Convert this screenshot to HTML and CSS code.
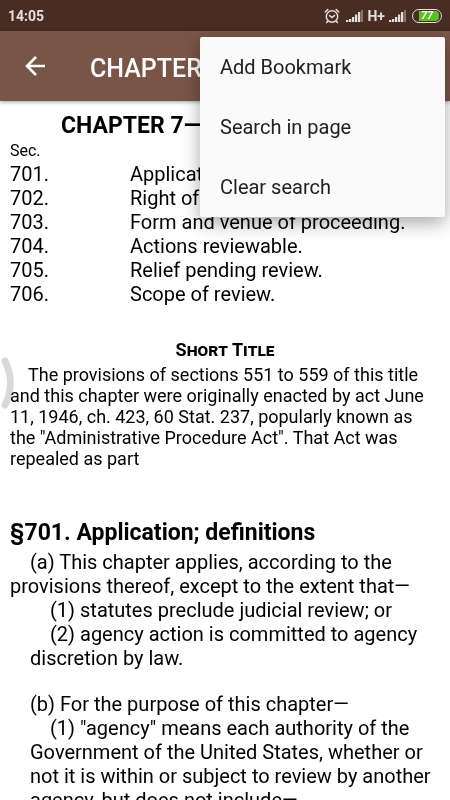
FILE: index.html
```html
<!DOCTYPE html>
<html lang="en">
<head>
<meta charset="UTF-8">
<meta name="viewport" content="width=device-width, initial-scale=1.0">
<title>Chapter 7 - Judicial Review</title>
<link rel="stylesheet" href="styles.css">
</head>
<body>
<div class="status-bar">
    <span class="clock">14:05</span>
    <div class="status-icons">
        <svg class="alarm" width="16" height="16" viewBox="0 0 16 16" fill="none" stroke="#e4dedc" stroke-linecap="round">
            <circle cx="8" cy="8.5" r="5.7" stroke-width="1.5"/>
            <path d="M5.6 7.6 8 9.6l2.6-2.2" stroke-width="1.4"/>
            <path d="M1.2 4 3.8 1.6M14.8 4l-2.6-2.4M3.8 13.2 2.6 14.6M12.2 13.2l1.2 1.4" stroke-width="1.5"/>
        </svg>
        <svg class="signal" width="17" height="12" viewBox="0 0 17 12" fill="#e4dedc">
            <path d="M0 10h2.3v2H0zM3 9h2.3v3H3zM6 7h2.3v5H6zM9 4.500h2.300v7.500H9zM12 2h2.300v10H12z"/>
            <path d="M15 0h2v12h-2z" opacity=".4"/>
        </svg>
        <span class="network">H+</span>
        <svg class="signal" width="17" height="12" viewBox="0 0 17 12" fill="#e4dedc">
            <path d="M0 10h2.3v2H0zM3 9h2.3v3H3zM6 7h2.3v5H6zM9 4.500h2.300v7.500H9zM12 2h2.300v10H12z"/>
            <path d="M15 0h2v12h-2z" opacity=".4"/>
        </svg>
        <span class="battery"><span class="level">77</span></span>
    </div>
</div>

<header class="app-bar">
    <button type="button" class="back" aria-label="Back">
        <svg width="22" height="22" viewBox="0 0 22 22" fill="none" stroke="#fff" stroke-width="2.6">
            <path d="M21 11H3.500M12 2 3 11l9 9"/>
        </svg>
    </button>
    <div class="title">CHAPTER 7—JUDICIAL REVIEW</div>
    <!-- overflow menu -->
    <div class="menu">
        <button type="button">Add Bookmark</button>
        <button type="button">Search in page</button>
        <button type="button">Clear search</button>
    </div>
</header>

<main class="reader">
    <h1>CHAPTER 7—JUDICIAL REVIEW</h1>
    <table class="sections">
        <thead>
            <tr><th colspan="2">Sec.</th></tr>
        </thead>
        <tbody>
            <tr><td>701.</td><td>Application; definitions.</td></tr>
            <tr><td>702.</td><td>Right of review.</td></tr>
            <tr><td>703.</td><td>Form and venue of proceeding.</td></tr>
            <tr><td>704.</td><td>Actions reviewable.</td></tr>
            <tr><td>705.</td><td>Relief pending review.</td></tr>
            <tr><td>706.</td><td>Scope of review.</td></tr>
        </tbody>
    </table>

    <h2 class="note-head">Short Title</h2>
    <p class="note">The provisions of sections 551 to 559 of this title and this chapter were originally enacted by act June 11, 1946, ch. 423, 60 Stat. 237, popularly known as the "Administrative Procedure Act". That Act was repealed as part</p>

    <h2 class="section-head">§701. Application; definitions</h2>
    <p class="para">(a) This chapter applies, according to the provisions thereof, except to the extent that—</p>
    <p class="para sub">(1) statutes preclude judicial review; or</p>
    <p class="para sub">(2) agency action is committed to agency discretion by law.</p>
    <p class="para next">(b) For the purpose of this chapter—</p>
    <p class="para sub">(1) "agency" means each authority of the Government of the United States, whether or not it is within or subject to review by another agency, but does not include—</p>

    <svg class="edge-handle" width="14" height="52" viewBox="0 0 14 52" fill="none" stroke="#d9d9d9" stroke-width="7" stroke-linecap="round">
        <path d="M5 4c7 14 7 30 0 44"/>
    </svg>
</main>
</body>
</html>
```
FILE: styles.css
```css
* {
    box-sizing: border-box;
}
body {
    font-family: Roboto, "Liberation Sans", sans-serif;
    margin: 0;
    height: 100vh;
    display: flex;
    flex-direction: column;
    overflow: hidden;
    background-color: #fff;
    color: #000;
}
button {
    font-family: inherit;
    border: none;
    background: none;
    cursor: pointer;
}

/* Status bar */
.status-bar {
    flex: none;
    display: flex;
    align-items: center;
    justify-content: space-between;
    height: 31px;
    padding: 1px 8px 0;
    background-color: #492c22;
    color: #e4dedc;
}
.clock {
    font-size: 14px;
    font-weight: bold;
}
.status-icons {
    display: flex;
    align-items: center;
    gap: 4px;
}
.alarm {
    margin-right: 2px;
}
.network {
    font-size: 14px;
    font-weight: bold;
}
.battery {
    width: 30px;
    height: 14px;
    margin-left: 2px;
    padding: 1px 2px 1px 6px;
    border: 1px solid #e4dedc;
    border-radius: 7px;
}
.level {
    display: block;
    height: 10px;
    padding-right: 4px;
    border-radius: 0 4px 4px 0;
    background-color: #58c31f;
    color: #fff;
    font-size: 11px;
    font-style: italic;
    font-weight: bold;
    line-height: 10px;
    text-align: center;
}

/* App bar */
.app-bar {
    position: relative;
    z-index: 1;
    flex: none;
    display: flex;
    align-items: center;
    height: 70px;
    background-color: #795548;
    color: #fff;
    box-shadow: 0 1px 4px rgba(0, 0, 0, 0.4);
}
.back {
    width: 70px;
    height: 70px;
    padding: 0;
    line-height: 0;
}
.title {
    flex: 1;
    padding: 4px 0 0 20px;
    font-size: 25px;
    font-weight: 500;
    white-space: nowrap;
    overflow: hidden;
}
.menu {
    position: absolute;
    top: 6px;
    right: 5px;
    width: 245px;
    border-radius: 2px;
    background-color: #fafafa;
    box-shadow: 0 6px 18px rgba(0, 0, 0, 0.35);
}
.menu button {
    display: block;
    width: 100%;
    height: 60px;
    padding: 0 20px;
    color: #212121;
    font-size: 20px;
    text-align: left;
}

/* Document text */
.reader {
    position: relative;
    flex: 1;
    min-height: 0;
    overflow: hidden;
    padding: 11px 10px;
}
h1, h2, p {
    margin: 0;
}
h1 {
    font-size: 23px;
    line-height: 28px;
    text-align: center;
}
.sections {
    border-collapse: collapse;
    width: 100%;
    font-size: 20px;
    line-height: 24px;
}
.sections th {
    padding: 0;
    font-size: 16px;
    font-weight: normal;
    line-height: 22px;
    text-align: left;
}
.sections td {
    padding: 0;
}
.sections td:first-child {
    width: 120px;
}
.note-head {
    margin-top: 32px;
    font-size: 18px;
    line-height: 24px;
    font-variant: small-caps;
    text-align: center;
}
.note {
    margin-top: 2px;
    font-size: 18px;
    line-height: 21px;
    text-indent: 18px;
}
.section-head {
    margin-top: 50px;
    font-size: 23px;
    line-height: 28px;
}
.para {
    font-size: 20px;
    line-height: 24px;
    text-indent: 20px;
}
.section-head + .para {
    margin-top: 3px;
}
.sub {
    padding-left: 20px;
}
.next {
    margin-top: 22px;
}

/* Drawer handle on the left edge */
.edge-handle {
    position: absolute;
    left: 0;
    top: 256px;
    mix-blend-mode: multiply;
}
```
